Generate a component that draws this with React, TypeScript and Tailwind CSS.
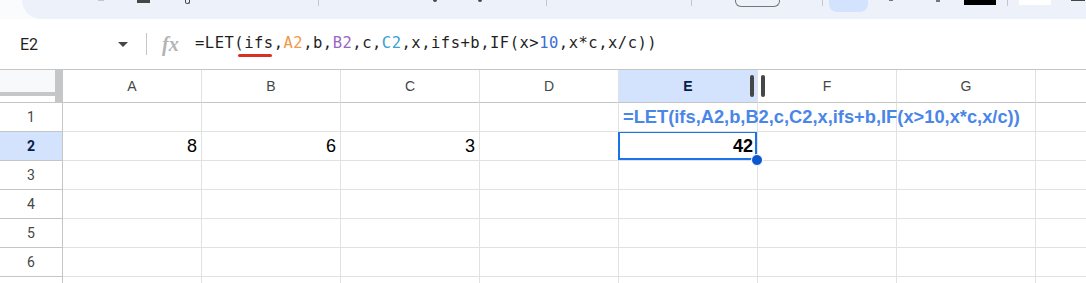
import React from 'react';

const COLS = ['A', 'B', 'C', 'D', 'E', 'F', 'G', 'H'];
const ROWS = [1, 2, 3, 4, 5, 6, 7];

// values for row 2, right aligned
const VALUES: Record<string, string> = { A2: '8', B2: '6', C2: '3' };

function Toolbar() {
  return (
    <div className="h-[19px] bg-[#f9fbfd] flex">
      <div className="ml-[22px] flex-1 h-full bg-[#edf2fa] rounded-bl-[22px] flex items-start">
        <div className="ml-[76px] w-[6px] h-[1px] bg-[#c4c7c5]" />
        <div className="ml-[33px] w-[13px] h-[3px] bg-[#444746]" />
        <div className="ml-[35px] w-[5px] h-[4px] border-x border-b border-[#444746] rounded-b-sm" />
        <div className="ml-[128px] w-px h-[6px] bg-[#c4c7c5]" />
        <div className="ml-[114px] w-[4px] h-[2px] bg-[#444746] rounded-b-sm" />
        <div className="ml-[41px] w-[4px] h-[2px] bg-[#444746] rounded-b-sm" />
        <div className="ml-[64px] w-px h-[6px] bg-[#c4c7c5]" />
        <div className="ml-[144px] w-px h-[6px] bg-[#c4c7c5]" />
        <div className="ml-[43px] w-[45px] h-[7px] border-x border-b border-[#747775] rounded-b-md" />
        <div className="ml-[42px] w-px h-[6px] bg-[#c4c7c5]" />
        <div className="ml-[6px] w-[39px] h-[12px] bg-[#d3e3fd] rounded-b-lg" />
        <div className="ml-[21px] w-[4px] h-[1px] bg-[#747775]" />
        <div className="ml-[43px] w-[4px] h-[2px] bg-[#747775]" />
        <div className="ml-[24px] w-[32px] h-[5px] bg-black" />
        <div className="ml-[11px] w-px h-[6px] bg-[#c4c7c5]" />
        <div className="ml-[11px] w-[32px] h-[5px] bg-white" />
        <div className="ml-[20px] w-[14px] h-[1px] bg-[#444746]" />
      </div>
    </div>
  );
}

function FormulaBar() {
  return (
    <div className="h-[51px] bg-white border-b border-[#c4c7c5] flex items-center">
      <div className="w-[146px] flex items-center pl-[20px] pr-[18px] font-['Roboto',sans-serif] text-[16px] text-[#1f1f1f]">
        <span className="pt-[1px]">E2</span>
        <span className="ml-auto w-0 h-0 border-x-[5px] border-x-transparent border-t-[5px] border-t-[#444746]" />
      </div>
      <div className="w-px h-[22px] bg-[#c4c7c5]" />
      <span className="ml-[15px] w-[20px] font-['Liberation_Serif',serif] italic font-bold text-[20px] text-[#b4b4b4] leading-none">
        fx
      </span>
      <div className="ml-[13px] font-['DejaVu_Sans_Mono',monospace] text-[15.5px] tracking-[0.5px] text-[#1f1f1f] whitespace-nowrap">
        =LET(
        <span className="relative">
          ifs
          <span className="absolute -left-[6px] right-[2px] -bottom-[5px] h-[3px] rounded-full bg-[#d93025]" />
        </span>
        ,<span className="text-[#f09a4a]">A2</span>,b,<span className="text-[#9b66c4]">B2</span>,c,
        <span className="text-[#3ba0d2]">C2</span>,x,ifs+b,IF(x&gt;<span className="text-[#3b6fd4]">10</span>,x*c,x/c))
      </div>
    </div>
  );
}

function Corner() {
  return (
    <div className="w-[63px] h-[33px] flex border-b border-[#c4c7c5] shrink-0">
      <div className="w-[55px] flex flex-col">
        <div className="h-[22px] bg-[#f8f9fa]" />
        <div className="h-[4px] bg-[#c4c7c5]" />
        <div className="flex-1 bg-white" />
      </div>
      <div className="w-[8px] bg-[#c4c7c5]" />
    </div>
  );
}

function ColHeader({ c }: { c: string }) {
  const sel = c === 'E';
  // column H is only partly on screen; its letter lies past the edge
  const label = c === 'H' ? '' : c;
  return (
    <div
      className={`relative w-[139px] shrink-0 h-[33px] border-b border-r border-b-[#c4c7c5] border-r-[#e1e1e1] flex items-center justify-center font-['Liberation_Sans',sans-serif] text-[14px] ${
        sel ? 'bg-[#d3e3fd] text-[#041e49] font-bold' : 'bg-white text-[#444746]'
      }`}
    >
      {label}
      {sel && (
        <>
          <span className="absolute left-[131px] top-[5px] w-[4px] h-[22px] rounded-full bg-[#444746] z-20" />
          <span className="absolute left-[142px] top-[5px] w-[4px] h-[22px] rounded-full bg-[#444746] z-20" />
        </>
      )}
    </div>
  );
}

function Cell({ c, r }: { c: string; r: number }) {
  const key = `${c}${r}`;
  const v = VALUES[key];
  if (key === 'E1') {
    return (
      <div className="relative w-[139px] shrink-0 h-[29px] border-b border-r border-[#e1e1e1] z-10">
        <span className="absolute left-[4px] top-0 h-full flex items-center whitespace-nowrap font-['Liberation_Sans',sans-serif] font-bold text-[18.3px] text-[#4a86e8]">
          =LET(ifs,A2,b,B2,c,C2,x,ifs+b,IF(x&gt;10,x*c,x/c))
        </span>
      </div>
    );
  }
  if (key === 'E2') {
    return (
      <div className="relative w-[139px] shrink-0 h-[29px] border-b border-r border-[#e1e1e1] flex items-center justify-end pr-[4px] font-['Liberation_Sans',sans-serif] font-bold text-[18px] text-black">
        42
        <span className="absolute -left-[1px] -top-[1px] right-0 bottom-0 border-2 border-[#1a73e8] pointer-events-none" />
        <span className="absolute -right-[6px] -bottom-[6px] w-[12px] h-[12px] rounded-full bg-[#0b57d0] border border-white z-20" />
      </div>
    );
  }
  return (
    <div className="w-[139px] shrink-0 h-[29px] border-b border-r border-[#e1e1e1] flex items-center justify-end pr-[4px] font-['Liberation_Sans',sans-serif] text-[18px] text-black">
      {v}
    </div>
  );
}

function Grid() {
  return (
    <div className="flex flex-col">
      <div className="flex">
        <Corner />
        {COLS.map((c) => (
          <ColHeader key={c} c={c} />
        ))}
      </div>
      {ROWS.map((r) => (
        <div key={r} className={`flex ${r === 1 ? 'relative z-10' : ''}`}>
          <div
            className={`w-[63px] shrink-0 h-[29px] border-b border-r border-[#c4c7c5] flex items-center justify-center font-['Roboto',sans-serif] text-[14px] ${
              r === 2 ? 'bg-[#d3e3fd] text-[#041e49] font-bold' : 'bg-white text-[#444746]'
            }`}
          >
            {r === 7 ? '' : r}
          </div>
          {COLS.map((c) => (
            <Cell key={c} c={c} r={r} />
          ))}
        </div>
      ))}
    </div>
  );
}

export default function App() {
  return (
    <div className="w-[1086px] h-[283px] overflow-hidden bg-white">
      <Toolbar />
      <FormulaBar />
      <Grid />
    </div>
  );
}
